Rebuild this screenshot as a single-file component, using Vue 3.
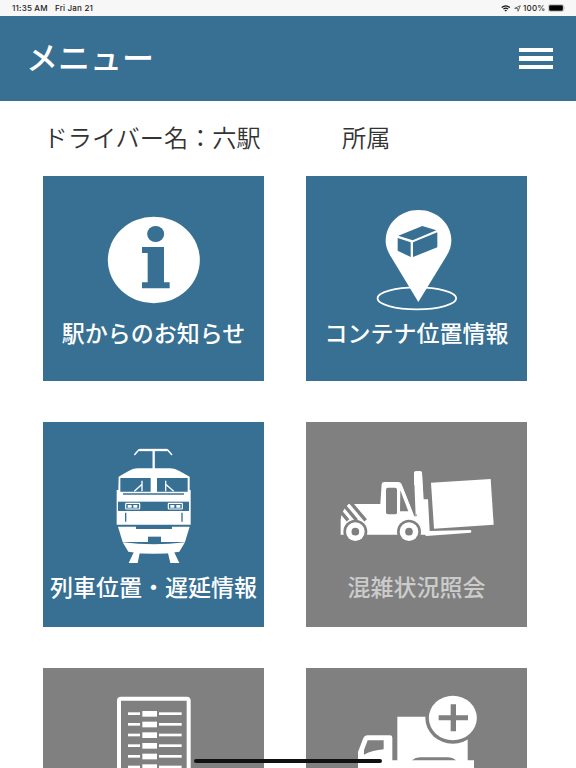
<template>
  <div class="screen">
    <!-- ステータスバー -->
    <div class="status-bar">
      <span class="clock">11:35 AM</span>
      <span class="date">Fri Jan 21</span>
      <div class="status-right">
        <svg class="wifi" viewBox="0 0 28 20">
          <path d="M2 7 Q14 -3 26 7" fill="none" stroke="#111" stroke-width="3.4" />
          <path d="M7 12 Q14 6 21 12" fill="none" stroke="#111" stroke-width="3.4" />
          <path d="M10 15 Q14 12 18 15 L14 19 Z" fill="#111" />
        </svg>
        <svg class="location" viewBox="0 0 20 20">
          <path d="M2 9.5 L18 2 L11.5 18 L10.5 10 Z" fill="none" stroke="#222" stroke-width="1.8" />
        </svg>
        <span class="percent">100%</span>
        <svg class="battery" viewBox="0 0 54 22">
          <rect x="1" y="1" width="46" height="20" rx="5" fill="none" stroke="#999" stroke-width="1.6" />
          <rect x="3.5" y="3" width="41" height="16" rx="3" fill="#000" />
          <path d="M49.5 7.5 Q53 11 49.5 14.5 Z" fill="#999" />
        </svg>
      </div>
    </div>

    <!-- ヘッダー -->
    <header class="header">
      <h1>メニュー</h1>
      <button class="hamburger" aria-label="menu">
        <i></i>
        <i></i>
        <i></i>
      </button>
    </header>

    <div class="driver">
      <span class="driver-name">ドライバー名：{{ driverName }}</span>
      <span>所属</span>
    </div>

    <!-- メニュー一覧 -->
    <main class="menu">
      <div
        v-for="item in items"
        :key="item.id"
        class="tile"
        :class="[item.id, { disabled: item.disabled }]"
      >
        <svg v-if="item.id === 'info'" class="icon" viewBox="204 132 300 276">
          <ellipse cx="353.5" cy="270" rx="138" ry="129.5" class="w" />
          <ellipse cx="359" cy="192" rx="25.5" ry="24" class="bg" />
          <path d="M318 231 H384 V337 H401 V355 H318 V337 H335 V249 H318 Z" class="bg" />
        </svg>

        <svg v-else-if="item.id === 'container'" class="icon" viewBox="216 108 270 324">
          <ellipse cx="350.5" cy="385" rx="118" ry="33" fill="none" stroke="#fff" stroke-width="5.5" />
          <path
            d="M355 396 L272 259 C261 240 257 226 257 212 C257 161 300 120 355.5 120 C411 120 454 161 454 212 C454 227 449 242 440 257 Z"
            class="w"
          />
          <path d="M295 197 L367 168 L409 181 L338 211 Z" class="bg" />
          <path d="M293 204 L332 217 V261 L293 242 Z" class="bg" />
          <path d="M339 217 L412 187 V232 L339 261 Z" class="bg" />
        </svg>

        <svg v-else-if="item.id === 'train'" class="icon" viewBox="0 0 330 408">
          <path
            d="M103 57 L116 42 H203 L216 57"
            fill="none"
            stroke="#fff"
            stroke-width="4.5"
            stroke-linejoin="round"
          />
          <path d="M118 42 H202" stroke="#fff" stroke-width="7" />
          <path d="M161 42 V100" stroke="#fff" stroke-width="7" />
          <path
            d="M56 122 C82 109 90 98 114 97 H209 C233 98 243 109 269 122 V162 H272 V266 H50 V162 H55 Z"
            class="w"
          />
          <path d="M61 126 H152 V167 H61 Z M171 126 H263 V167 H171 Z" class="bg" />
          <path
            d="M126 134 V166 M126 145 L103 166 M197 134 V166 M197 145 L221 166"
            fill="none"
            stroke="#fff"
            stroke-width="4"
          />
          <path d="M69 174 H252" class="line" stroke-width="4" />
          <rect x="54" y="197" width="213" height="28" class="bg" />
          <g fill="none" stroke="#fff" stroke-width="3.5">
            <rect x="77" y="202" width="42" height="17" rx="2" />
            <rect x="205" y="202" width="42" height="17" rx="2" />
          </g>
          <path d="M83 207 H95 V215 H83 Z M100 207 H112 V215 H100 Z" class="w" />
          <path d="M211 207 H223 V215 H211 Z M229 207 H241 V215 H229 Z" class="w" />
          <path d="M77 230 V257 M246 230 V257" class="line" stroke-width="4" />
          <path d="M54 272 H269 L255 318 H68 Z" class="w" />
          <rect x="108" y="270" width="108" height="9" class="bg" />
          <rect x="144" y="302" width="39" height="19" class="bg" />
          <path d="M68 319 Q161 331 255 319 L238 347 Q161 360 85 347 Z" class="w" />
          <path d="M102 347 H120 L113 381 H86 Z M203 347 H222 L238 381 H211 Z" class="w" />
        </svg>

        <svg v-else-if="item.id === 'congestion'" class="icon" viewBox="0 0 528 270">
          <!-- 車体 -->
          <path
            d="M56 132 H151 L155 72 Q156 66 163 66 H204 Q212 66 215 73 L254 167 L252 40 Q252 34 258 34 H271 Q276 34 276 40 L281 118 H294 L299 213 L422 210 Q426 214 422 218 L288 228 L285 224 H32 V180 Q32 168 38 157 Q43 143 56 132 Z"
            class="w"
          />
          <path
            d="M62 128 L107 181 M44 138 L80 181 M32 155 L54 181"
            class="line"
            stroke-width="10"
          />
          <path d="M174 83 H195 Q201 83 201 89 V158 Q201 163 195 163 H174 Q168 163 168 157 V89 Q168 83 174 83 Z" class="bg" />
          <path d="M211 91 L235 154 H210 Z" class="bg" />
          <path d="M217 75 L253 169 H260 V75 Z" class="bg" />
          <path d="M252 40 Q252 34 258 34 H271 Q276 34 276 40 L279 119 L257 169 Z" class="w" />
          <path d="M303 68 L482 57 L491 194 L312 206 Z" class="w" />
          <!-- タイヤ -->
          <circle cx="76" cy="215" r="36" class="bg" />
          <circle cx="237" cy="215" r="36" class="bg" />
          <circle cx="76" cy="215" r="28" class="w" />
          <circle cx="237" cy="215" r="28" class="w" />
          <circle cx="76" cy="215" r="11.5" class="bg" />
          <circle cx="237" cy="215" r="11.5" class="bg" />
        </svg>

        <svg v-else-if="item.id === 'list'" class="icon" viewBox="42 99 240 300">
          <rect x="57" y="113" width="209" height="275" rx="6" fill="none" stroke="#fff" stroke-width="12" />
          <g v-for="n in 8" :key="n" :transform="`translate(0 ${(n - 1) * 32})`">
            <rect x="84" y="154" width="36" height="8" class="w" />
            <rect x="127" y="150" width="44" height="17" class="w" />
            <rect x="177" y="154" width="68" height="8" class="w" />
          </g>
        </svg>

        <svg v-else class="icon" viewBox="0 90 600 300">
          <path d="M172 170 H383 V301 H402 V350 H172 Z" class="w" />
          <path
            d="M54 350 V276 L70 234 Q73 226 82 226 H150 Q157 226 157 233 V301 H180 V350 Z"
            class="w"
          />
          <path d="M83 241 H131 V268 Q98 271 72 284 V270 Z" class="bg" />
          <path d="M216 301 Q226 292 240 292 H323 Q338 292 348 301 Z" class="bg" />
          <ellipse cx="338.5" cy="174" rx="82.5" ry="77" class="bg" />
          <ellipse cx="338.5" cy="174" rx="72" ry="66.5" class="w" />
          <path d="M332 133 H348 V166 H384 V181 H348 V214 H332 V181 H296 V166 H332 Z" class="bg" />
        </svg>

        <p v-if="item.label" class="label">{{ item.label }}</p>
      </div>
    </main>

    <div class="home-indicator"></div>
  </div>
</template>

<script setup>
import { ref } from 'vue'

const driverName = ref('六駅')

// disabled: 利用できないメニューはグレー表示
const items = [
  { id: 'info', label: '駅からのお知らせ', disabled: false },
  { id: 'container', label: 'コンテナ位置情報', disabled: false },
  { id: 'train', label: '列車位置・遅延情報', disabled: false },
  { id: 'congestion', label: '混雑状況照会', disabled: true },
  { id: 'list', label: '', disabled: true },
  { id: 'truck', label: '', disabled: true },
]
</script>

<style>
body {
  margin: 0;
  overflow: hidden;
}
</style>

<style scoped>
.screen {
  position: relative;
  width: 576px;
  height: 768px;
  overflow: hidden;
  background: #fff;
  font-family: "Liberation Sans", "Noto Sans CJK JP", sans-serif;
}
.status-bar {
  display: flex;
  align-items: center;
  height: 16px;
  padding: 0 10px 0 12px;
  box-sizing: border-box;
  background: #f7f7f7;
  color: #222;
  font-family: Inter, "Liberation Sans", sans-serif;
  font-size: 8px;
  font-weight: 500;
  line-height: 16px;
  white-space: nowrap;
}
.clock { width: 43px; letter-spacing: 0.2px; }
.date { letter-spacing: 0.18px; }
.status-right { display: flex; align-items: center; margin-left: auto; }
.wifi { width: 9.5px; height: 7px; }
.location { width: 7px; height: 7px; margin: 0 2.5px 0 3px; }
.percent { width: 25px; letter-spacing: 0.2px; }
.battery { width: 18px; height: 8px; }

.header {
  display: flex;
  align-items: center;
  justify-content: space-between;
  height: 85px;
  padding: 0 23px 0 26px;
  background: #377093;
}
.header h1 {
  margin: 0;
  color: #fff;
  font-family: "Noto Sans CJK JP", sans-serif;
  font-size: 32px;
  font-weight: 500;
  line-height: 81px;
  height: 85px;
}
.hamburger {
  display: flex;
  flex-direction: column;
  gap: 4px;
  width: 34px;
  padding: 0;
  border: none;
  background: none;
}
.hamburger i { height: 4.6px; background: #fff; }

.driver {
  display: flex;
  height: 75px;
  padding-left: 43.5px;
  color: #333;
  font-family: "Noto Sans CJK JP", sans-serif;
  font-size: 24.2px;
  font-weight: 350;
  line-height: 71px;
  white-space: nowrap;
}
.driver-name { width: 298.5px; }

.menu {
  display: grid;
  grid-template-columns: 220.3px 220.3px;
  grid-auto-rows: 204.8px;
  gap: 41px 42.7px;
  padding-left: 43.3px;
}
.tile {
  --tile: #377093;
  display: flex;
  flex-direction: column;
  align-items: center;
  overflow: hidden;
  background: var(--tile);
}
.tile.disabled { --tile: #808080; }
.icon { flex: none; }
.w { fill: #fff; }
.bg { fill: var(--tile); }
.line { stroke: var(--tile); fill: none; }
.info .icon { width: 100px; height: 92px; margin: 38px 0 0 1.4px; }
.container .icon { width: 90px; height: 108px; margin: 30px 0 0 1.4px; }
.train .icon { width: 110px; height: 136px; margin: 14.5px 0 0 3px; }
.congestion .icon { width: 176px; height: 90px; margin: 38.5px 0 0 3px; }
.list .icon { width: 80px; height: 100px; margin: 26px 0 0 1.4px; }
.truck .icon { width: 200px; height: 100px; margin: 22.7px 0 0 47.4px; }
.label {
  margin: 8.3px 0 0;
  color: #fff;
  font-family: "Noto Sans CJK JP", sans-serif;
  font-size: 23px;
  font-weight: 500;
  line-height: 36px;
  white-space: nowrap;
}
.container .label { margin-top: 0.3px; }
.train .label { margin-top: -4.3px; }
.congestion .label { margin-top: 17.7px; }
.disabled .label { color: #ccc; }

.home-indicator {
  position: absolute;
  left: 194px;
  bottom: 5px;
  width: 188px;
  height: 4px;
  border-radius: 2px;
  background: #111;
}
</style>
